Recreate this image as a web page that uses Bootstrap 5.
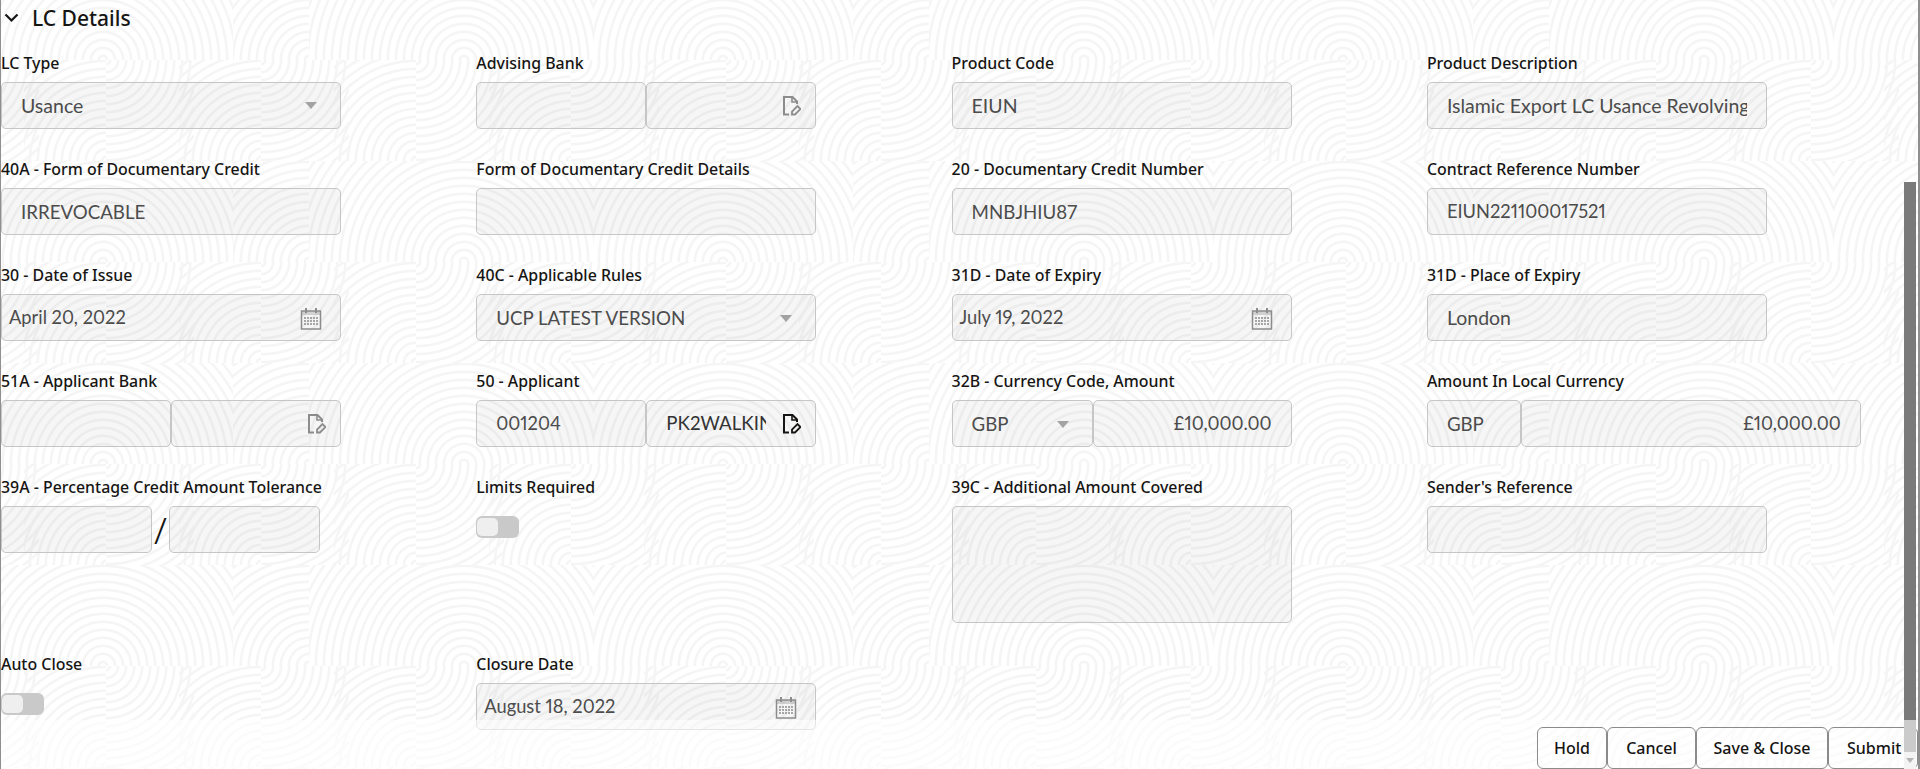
<!doctype html>
<html lang="en"><head><meta charset="utf-8">
<link rel="stylesheet" href="https://cdn.jsdelivr.net/npm/bootstrap@5.3.0/dist/css/bootstrap.min.css">
<style>
html,body{height:769px;overflow:hidden}
body{font-family:"Noto Sans",sans-serif;color:#161513;background:#fff}
.pane{position:relative;height:769px;border-left:1px solid #8f8f8f;border-right:2px solid #8f8f8f;overflow:hidden;background-color:#fff;
background-image:url("data:image/svg+xml,%3Csvg xmlns='http://www.w3.org/2000/svg' width='620' height='202'%3E%3Cdefs%3E%3CradialGradient id='z' gradientUnits='userSpaceOnUse' r='8' spreadMethod='repeat'%3E%3Cstop offset='.3' stop-color='rgb(245,245,245)' stop-opacity='0'/%3E%3Cstop offset='.42' stop-color='rgb(245,245,245)'/%3E%3Cstop offset='.62' stop-color='rgb(245,245,245)'/%3E%3Cstop offset='.75' stop-color='rgb(245,245,245)' stop-opacity='0'/%3E%3C/radialGradient%3E%3CradialGradient id='a' href='%23z' cx='155' cy='101'/%3E%3CradialGradient id='b' href='%23z' cx='414' cy='101'/%3E%3CradialGradient id='c' href='%23z' cx='620' cy='101'/%3E%3CradialGradient id='d' href='%23z' cx='107' cy='101'/%3E%3CradialGradient id='e' href='%23z' cx='262' cy='202'/%3E%3CradialGradient id='f' href='%23z' cx='262' cy='101'/%3E%3CradialGradient id='g' href='%23z' cx='417' cy='202'/%3E%3CradialGradient id='h' href='%23z' cx='417' cy='101'/%3E%3CradialGradient id='i' href='%23z' cx='572' cy='202'/%3E%3CradialGradient id='j' href='%23z' cx='572' cy='101'/%3E%3CradialGradient id='k' href='%23z' cx='107' cy='202'/%3E%3CradialGradient id='l' href='%23z' cx='-48' cy='101'/%3E%3C/defs%3E%3Crect width='284' height='101' fill='url(%23a)'/%3E%3Crect x='284' width='260' height='101' fill='url(%23b)'/%3E%3Crect x='544' width='76' height='101' fill='url(%23c)'/%3E%3Crect x='107' y='101' width='88' height='101' fill='url(%23d)'/%3E%3Crect x='180' y='101' width='82' height='101' fill='url(%23e)'/%3E%3Crect x='262' y='101' width='88' height='101' fill='url(%23f)'/%3E%3Crect x='335' y='101' width='82' height='101' fill='url(%23g)'/%3E%3Crect x='417' y='101' width='88' height='101' fill='url(%23h)'/%3E%3Crect x='490' y='101' width='82' height='101' fill='url(%23i)'/%3E%3Crect x='572' y='101' width='48' height='101' fill='url(%23j)'/%3E%3Crect x='25' y='101' width='82' height='101' fill='url(%23k)'/%3E%3Crect y='101' width='40' height='101' fill='url(%23l)'/%3E%3C/svg%3E");
background-position:308px -41px}
.sect-head{height:36px;padding-left:3px}
.sect-title{font-size:21px;font-weight:500;margin-left:13px;line-height:1}
.field-grid{display:grid;grid-template-columns:repeat(4,475.3px)}
.fld{height:106px;padding-top:17px}
.fld-tall{height:177px}
.fld-lab{display:block;font-size:15.9px;font-weight:500;line-height:20px;margin:0 0 9px;white-space:nowrap}
.ctl{display:flex;width:340px}
.ctl-local{width:434px}
.ctl-tol{width:319px}
.bx{height:47px;flex:1 1 0;min-width:0;border:1px solid #c6c6c6;border-radius:5px;background:rgba(90,90,90,.055);display:flex;align-items:center;padding:0 19px;font-family:"Lato",sans-serif;font-size:19.5px;font-variant-numeric:proportional-nums;color:#4c4c4c;white-space:nowrap}
.bx-tall{height:117px}
.bx-date{padding-left:7px}
.bx-gbp{flex:0 0 141px}
.bx-gbpl{flex:0 0 94px}
.bx-amt{justify-content:flex-end}
.bx-dark{color:#333;font-size:18.7px}
.bx-caps{font-size:18.7px;padding-top:1px}
.bx-num{font-size:18.3px;padding-top:1px}
.bx-txt{flex:1 1 0;min-width:0;overflow:hidden}
.ic-cal{flex:none;margin-left:auto;margin-right:-1px;color:#8c8c8c}
.ic-doc{flex:none;margin-left:auto;margin-right:-5px;color:#8c8c8c}
.ic-doc-on{margin-left:16px;color:#161513}
.ic-car{flex:none;margin-left:auto;margin-right:4px;color:#a3a3a3}
.slash-sep{flex:0 0 17px;font-size:37px;line-height:47px;text-align:center;font-weight:300;color:#161513}
.tog{width:43px;height:22px;margin-top:19px;border-radius:6px;background:#c9c9c9;padding:2px 21px 2px 1px}
.tog-knob{height:100%;background:#efefef;border-radius:5px}
.foot-bar{position:absolute;left:0;right:0;top:720px;height:49px;background:rgba(255,255,255,.55);padding-top:7px}
.act-btn{height:42px;padding:0;font-family:"Noto Sans",sans-serif;font-size:16px;font-weight:500;color:#161513;background:transparent;border:1px solid #8a8a8a;border-radius:6px}
.act-hold{width:70px}.act-cancel{width:89px}.act-save{width:132px}
.act-submit{width:90px;text-align:left;padding-left:18px}
.sb-rail{position:absolute;right:2px;top:182px;width:12px;height:587px;background:#cbcbcb}
.sb-thumb{height:538px;background:#7a7a7a}
.sb-end{position:absolute;left:0;right:0;bottom:0;height:17px;background:#f4f4f4;display:flex;align-items:center;justify-content:center}
</style></head><body>
<svg width="0" height="0" class="d-block">
<symbol id="cal" viewBox="0 0 22 23"><path d="M1.5 4h19v18h-19z" fill="none" stroke="currentColor" stroke-width="1.5"/><path d="M1.5 4h19v4h-19z" fill="currentColor" opacity=".35"/><path d="M6 1v5M16 1v5" stroke="currentColor" stroke-width="2"/><path d="M4 11h14M4 14h14M4 17h14" stroke="currentColor" stroke-width="1.6" stroke-dasharray="2 1"/></symbol>
<symbol id="doc" viewBox="0 0 19 21"><path d="M7 19.5H2V2h8.5L15 6.5V9" fill="none" stroke="currentColor" stroke-width="2"/><path d="M10 2v5h5" fill="none" stroke="currentColor" stroke-width="1.6"/><path d="M10 19.5v-3l5.5-5.5 3 3-5.5 5.5z" fill="none" stroke="currentColor" stroke-width="1.8"/></symbol>
<symbol id="car" viewBox="0 0 12 7"><path d="M0 0h12L6 7z" fill="currentColor"/></symbol>
</svg>
<div class="pane">
<div class="sect-head d-flex align-items-center">
<svg width="15" height="10" viewBox="0 0 15 10"><path d="M1.5 1.5l6 6 6-6" fill="none" stroke="#161513" stroke-width="2.2"/></svg>
<span class="sect-title">LC Details</span></div>
<div class="field-grid">
<div class="fld"><label class="fld-lab">LC Type</label><div class="ctl"><div class="bx">Usance<svg class="ic-car" width="12" height="7"><use href="#car"/></svg></div></div></div>
<div class="fld"><label class="fld-lab">Advising Bank</label><div class="ctl"><div class="bx"></div><div class="bx"><svg class="ic-doc" width="19" height="21"><use href="#doc"/></svg></div></div></div>
<div class="fld"><label class="fld-lab">Product Code</label><div class="ctl"><div class="bx">EIUN</div></div></div>
<div class="fld"><label class="fld-lab">Product Description</label><div class="ctl"><div class="bx"><span class="bx-txt">Islamic Export LC Usance Revolving</span></div></div></div>

<div class="fld"><label class="fld-lab">40A - Form of Documentary Credit</label><div class="ctl"><div class="bx bx-caps">IRREVOCABLE</div></div></div>
<div class="fld"><label class="fld-lab">Form of Documentary Credit Details</label><div class="ctl"><div class="bx"></div></div></div>
<div class="fld"><label class="fld-lab">20 - Documentary Credit Number</label><div class="ctl"><div class="bx bx-caps">MNBJHIU87</div></div></div>
<div class="fld"><label class="fld-lab">Contract Reference Number</label><div class="ctl"><div class="bx bx-num">EIUN221100017521</div></div></div>

<div class="fld"><label class="fld-lab">30 - Date of Issue</label><div class="ctl"><div class="bx bx-date bx-num">April 20, 2022<svg class="ic-cal" width="22" height="23"><use href="#cal"/></svg></div></div></div>
<div class="fld"><label class="fld-lab">40C - Applicable Rules</label><div class="ctl"><div class="bx bx-caps">UCP LATEST VERSION<svg class="ic-car" width="12" height="7"><use href="#car"/></svg></div></div></div>
<div class="fld"><label class="fld-lab">31D - Date of Expiry</label><div class="ctl"><div class="bx bx-date bx-num">July 19, 2022<svg class="ic-cal" width="22" height="23"><use href="#cal"/></svg></div></div></div>
<div class="fld"><label class="fld-lab">31D - Place of Expiry</label><div class="ctl"><div class="bx">London</div></div></div>

<div class="fld"><label class="fld-lab">51A - Applicant Bank</label><div class="ctl"><div class="bx"></div><div class="bx"><svg class="ic-doc" width="19" height="21"><use href="#doc"/></svg></div></div></div>
<div class="fld"><label class="fld-lab">50 - Applicant</label><div class="ctl"><div class="bx bx-num">001204</div><div class="bx bx-dark"><span class="bx-txt">PK2WALKIN</span><svg class="ic-doc ic-doc-on" width="19" height="21"><use href="#doc"/></svg></div></div></div>
<div class="fld"><label class="fld-lab">32B - Currency Code, Amount</label><div class="ctl"><div class="bx bx-gbp bx-caps">GBP<svg class="ic-car" width="12" height="7"><use href="#car"/></svg></div><div class="bx bx-amt bx-num">£10,000.00</div></div></div>
<div class="fld"><label class="fld-lab">Amount In Local Currency</label><div class="ctl ctl-local"><div class="bx bx-gbpl bx-caps">GBP</div><div class="bx bx-amt bx-num">£10,000.00</div></div></div>

<div class="fld fld-tall"><label class="fld-lab">39A - Percentage Credit Amount Tolerance</label><div class="ctl ctl-tol"><div class="bx"></div><span class="slash-sep">/</span><div class="bx"></div></div></div>
<div class="fld fld-tall"><label class="fld-lab">Limits Required</label><div class="tog"><div class="tog-knob"></div></div></div>
<div class="fld fld-tall"><label class="fld-lab">39C - Additional Amount Covered</label><div class="ctl"><div class="bx bx-tall"></div></div></div>
<div class="fld fld-tall"><label class="fld-lab">Sender's Reference</label><div class="ctl"><div class="bx"></div></div></div>

<div class="fld"><label class="fld-lab">Auto Close</label><div class="tog"><div class="tog-knob"></div></div></div>
<div class="fld"><label class="fld-lab">Closure Date</label><div class="ctl"><div class="bx bx-date bx-num">August 18, 2022<svg class="ic-cal" width="22" height="23"><use href="#cal"/></svg></div></div></div>
</div>
<div class="foot-bar d-flex justify-content-end">
<button type="button" class="btn act-btn act-hold">Hold</button>
<button type="button" class="btn act-btn act-cancel">Cancel</button>
<button type="button" class="btn act-btn act-save">Save &amp; Close</button>
<button type="button" class="btn act-btn act-submit">Submit</button>
</div>
<div class="sb-rail"><div class="sb-thumb"></div><div class="sb-end"><svg width="8" height="5"><path d="M0 0h8L4 5z" fill="#b5b5b5"/></svg></div></div>
</div>
<script src="https://cdn.jsdelivr.net/npm/bootstrap@5.3.0/dist/js/bootstrap.bundle.min.js"></script>
</body></html>
